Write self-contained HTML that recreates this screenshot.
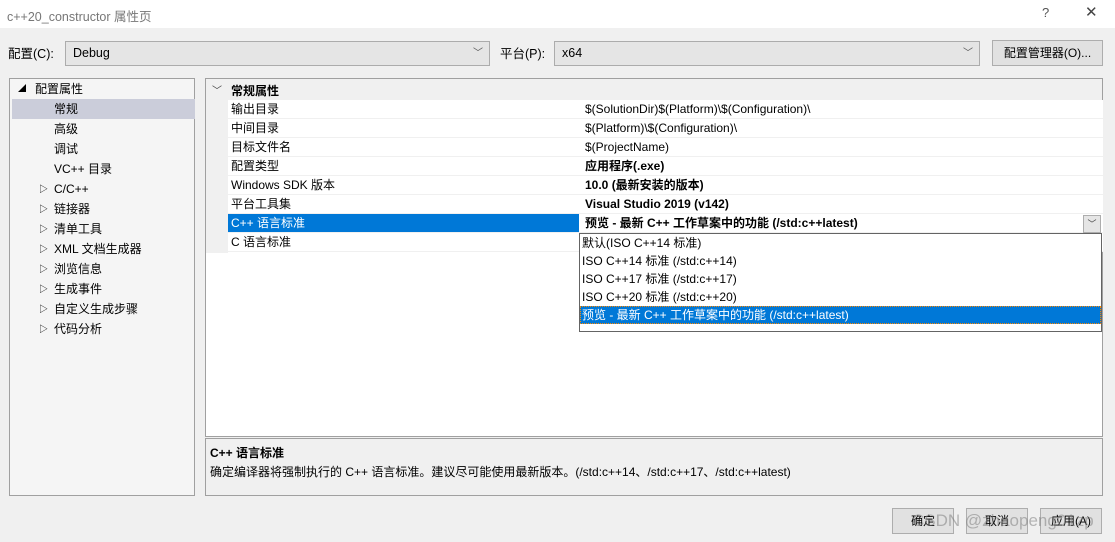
<!DOCTYPE html>
<html><head><meta charset="utf-8"><style>
*{margin:0;padding:0;box-sizing:border-box}
body{width:1115px;height:542px;background:#f0f0f0;font-family:"Liberation Sans","Noto Sans CJK SC",sans-serif;font-size:12px;color:#000;position:relative;overflow:hidden}
.a{position:absolute;white-space:nowrap}
.combo{position:absolute;background:#e5e5e5;border:1px solid #acacac;height:25px;line-height:23px;padding-left:7px;font-size:12.5px}
.chev{position:absolute;right:6px;top:0;color:#555;font-size:10px}
.btn{position:absolute;background:#e1e1e1;border:1px solid #adadad;height:26px;line-height:24px;text-align:center;font-size:12px}
.tree div{position:absolute;left:0;width:183px;height:20px;line-height:20px}
.row{position:absolute;left:22px;width:875px;height:19px;line-height:18px;background:#fff;border-bottom:1px solid #f0f0f0}
.row span{position:absolute}
.row .n{left:3px}
.row .v{left:357px}
.b{font-weight:bold}
.dd div{height:18px;line-height:18px;padding-left:2px}
</style></head><body>
<div class="a" style="left:0;top:0;width:1115px;height:28px;background:#fff"></div>
<div class="a" style="left:7px;top:6px;color:#777;font-size:12.5px">c++20_constructor 属性页</div>
<div class="a" style="left:1042px;top:5px;color:#555;font-size:13px">?</div>
<div class="a" style="left:1085px;top:3px;color:#444;font-size:15px">✕</div>

<div class="a" style="left:8px;top:43px;font-size:12.5px">配置(C):</div>
<div class="combo" style="left:65px;top:41px;width:425px">Debug<span class="chev">﹀</span></div>
<div class="a" style="left:500px;top:43px;font-size:12.5px">平台(P):</div>
<div class="combo" style="left:554px;top:41px;width:426px">x64<span class="chev">﹀</span></div>
<div class="btn" style="left:992px;top:40px;width:111px;height:26px">配置管理器(O)...</div>

<div class="a tree" style="left:9px;top:78px;width:186px;height:418px;background:#f5f5f5;border:1px solid #a0a0a0">
<div style="top:0;left:0"><span style="position:absolute;left:8px;font-size:8px">◢</span><span style="position:absolute;left:25px">配置属性</span></div>
<div style="top:20px;left:2px;background:#cbcdda"><span style="position:absolute;left:42px">常规</span></div>
<div style="top:40px"><span style="position:absolute;left:44px">高级</span></div>
<div style="top:60px"><span style="position:absolute;left:44px">调试</span></div>
<div style="top:80px"><span style="position:absolute;left:44px">VC++ 目录</span></div>
<div style="top:100px"><span style="position:absolute;left:29px;font-size:9px">▷</span><span style="position:absolute;left:44px">C/C++</span></div>
<div style="top:120px"><span style="position:absolute;left:29px;font-size:9px">▷</span><span style="position:absolute;left:44px">链接器</span></div>
<div style="top:140px"><span style="position:absolute;left:29px;font-size:9px">▷</span><span style="position:absolute;left:44px">清单工具</span></div>
<div style="top:160px"><span style="position:absolute;left:29px;font-size:9px">▷</span><span style="position:absolute;left:44px">XML 文档生成器</span></div>
<div style="top:180px"><span style="position:absolute;left:29px;font-size:9px">▷</span><span style="position:absolute;left:44px">浏览信息</span></div>
<div style="top:200px"><span style="position:absolute;left:29px;font-size:9px">▷</span><span style="position:absolute;left:44px">生成事件</span></div>
<div style="top:220px"><span style="position:absolute;left:29px;font-size:9px">▷</span><span style="position:absolute;left:44px">自定义生成步骤</span></div>
<div style="top:240px"><span style="position:absolute;left:29px;font-size:9px">▷</span><span style="position:absolute;left:44px">代码分析</span></div>
</div>

<div class="a" style="left:205px;top:78px;width:898px;height:359px;background:#fff;border:1px solid #a0a0a0">
<div class="a" style="left:0;top:0;width:22px;height:174px;background:#f0f0f0"></div>
<div class="a" style="left:0;top:0;width:896px;height:21px;background:#f0f0f0"></div>
<div class="a" style="left:6px;top:3px;font-size:10px;color:#444">﹀</div>
<div class="a b" style="left:25px;top:3px">常规属性</div>
<div class="row" style="top:21px"><span class="n">输出目录</span><span class="v">$(SolutionDir)$(Platform)\$(Configuration)\</span></div>
<div class="row" style="top:40px"><span class="n">中间目录</span><span class="v">$(Platform)\$(Configuration)\</span></div>
<div class="row" style="top:59px"><span class="n">目标文件名</span><span class="v">$(ProjectName)</span></div>
<div class="row" style="top:78px"><span class="n">配置类型</span><span class="v b">应用程序(.exe)</span></div>
<div class="row" style="top:97px"><span class="n">Windows SDK 版本</span><span class="v b">10.0 (最新安装的版本)</span></div>
<div class="row" style="top:116px"><span class="n">平台工具集</span><span class="v b">Visual Studio 2019 (v142)</span></div>
<div class="row" style="top:135px;background:linear-gradient(90deg,#0078d7 0 351px,#fff 351px)"><span class="n" style="color:#fff">C++ 语言标准</span><span class="v b">预览 - 最新 C++ 工作草案中的功能 (/std:c++latest)</span></div>
<div class="a" style="left:877px;top:136px;width:18px;height:18px;border:1px solid #adadad;background:#e5e5e5;font-size:9px;text-align:center;line-height:16px;color:#444">﹀</div>
<div class="row" style="top:154px"><span class="n">C 语言标准</span></div>
</div>

<div class="a dd" style="left:579px;top:233px;width:523px;height:99px;background:#fff;border:1px solid #646464">
<div>默认(ISO C++14 标准)</div>
<div>ISO C++14 标准 (/std:c++14)</div>
<div>ISO C++17 标准 (/std:c++17)</div>
<div>ISO C++20 标准 (/std:c++20)</div>
<div style="background:#0078d7;color:#fff;outline:1px dotted #f80;outline-offset:-1px">预览 - 最新 C++ 工作草案中的功能 (/std:c++latest)</div>
</div>

<div class="a" style="left:205px;top:438px;width:898px;height:58px;background:#f0f0f0;border:1px solid #a0a0a0">
<div class="a b" style="left:4px;top:5px">C++ 语言标准</div>
<div class="a" style="left:4px;top:24px">确定编译器将强制执行的 C++ 语言标准。建议尽可能使用最新版本。(/std:c++14、/std:c++17、/std:c++latest)</div>
</div>

<div class="btn" style="left:892px;top:508px;width:62px">确定</div>
<div class="btn" style="left:966px;top:508px;width:62px">取消</div>
<div class="btn" style="left:1040px;top:508px;width:62px">应用(A)</div>
<div class="a" style="left:912px;top:511px;font-size:17px;color:rgba(120,120,120,.5)">CSDN @zhaopeng01zp</div>
</body></html>
